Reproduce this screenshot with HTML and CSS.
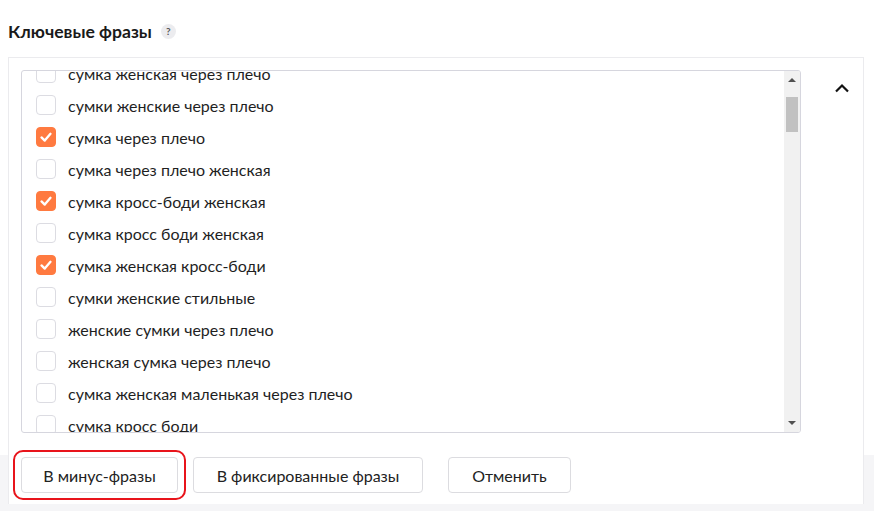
FILE: index.html
```html
<!DOCTYPE html>
<html lang="ru">
<head>
<meta charset="utf-8">
<link rel="stylesheet" href="styles.css">
</head>
<body>
<div class="header">
  <h2 class="title">Ключевые фразы</h2>
  <span class="help">?</span>
</div>
<div class="card">
  <div class="main">
    <div class="listbox">
      <div class="viewport">
        <ul class="rows">
          <li class="row"><span class="cb"></span><span class="label">сумка женская через плечо</span></li>
          <li class="row"><span class="cb"></span><span class="label">сумки женские через плечо</span></li>
          <li class="row"><span class="cb on"><svg viewBox="0 0 20 20"><polyline points="5,10.5 8.6,14 15,6.5"/></svg></span><span class="label">сумка через плечо</span></li>
          <li class="row"><span class="cb"></span><span class="label">сумка через плечо женская</span></li>
          <li class="row"><span class="cb on"><svg viewBox="0 0 20 20"><polyline points="5,10.5 8.6,14 15,6.5"/></svg></span><span class="label">сумка кросс-боди женская</span></li>
          <li class="row"><span class="cb"></span><span class="label">сумка кросс боди женская</span></li>
          <li class="row"><span class="cb on"><svg viewBox="0 0 20 20"><polyline points="5,10.5 8.6,14 15,6.5"/></svg></span><span class="label">сумка женская кросс-боди</span></li>
          <li class="row"><span class="cb"></span><span class="label">сумки женские стильные</span></li>
          <li class="row"><span class="cb"></span><span class="label">женские сумки через плечо</span></li>
          <li class="row"><span class="cb"></span><span class="label">женская сумка через плечо</span></li>
          <li class="row"><span class="cb"></span><span class="label">сумка женская маленькая через плечо</span></li>
          <li class="row"><span class="cb"></span><span class="label">сумка кросс боди</span></li>
        </ul>
      </div>
      <div class="scrollbar">
        <span class="arrow up"></span>
        <span class="track"><span class="thumb"></span></span>
        <span class="arrow down"></span>
      </div>
    </div>
    <div class="actions">
      <button class="btn btn-minus">В минус-фразы</button>
      <button class="btn btn-fixed">В фиксированные фразы</button>
      <button class="btn btn-cancel">Отменить</button>
    </div>
  </div>
  <div class="side">
    <svg class="chevron" viewBox="0 0 16 10"><polyline points="2,8.5 8,2.5 14,8.5"/></svg>
  </div>
</div>
</body>
</html>
```
FILE: styles.css
```css
* { box-sizing: border-box; }
html, body { margin: 0; padding: 0; }
body {
  width: 874px;
  height: 511px;
  overflow: hidden;
  font-family: "Lato", "Noto Sans", sans-serif;
  color: #1f1f1f;
  background: linear-gradient(to bottom, #ffffff 0, #ffffff 455px, #f5f5f7 455px);
}
.header {
  display: flex;
  align-items: center;
  height: 57px;
  padding: 5px 0 0 8px;
}
.title {
  margin: 0;
  font-size: 17.6px;
  font-weight: 700;
  color: #1a1a1a;
}
.help {
  width: 15px;
  height: 15px;
  margin-left: 9px;
  border-radius: 50%;
  background: #ececef;
  color: #555;
  font-size: 10px;
  font-weight: 700;
  line-height: 15px;
  text-align: center;
}
.card {
  display: flex;
  margin-left: 8px;
  width: 856px;
  height: 447px;
  background: #fff;
  border: 1px solid #ebebee;
  border-bottom: none;
}
.main {
  padding: 12px 0 0 12px;
}
.listbox {
  display: flex;
  width: 780px;
  height: 363px;
  border: 1px solid #d6d6de;
  border-radius: 3px;
  overflow: hidden;
}
.viewport {
  flex: 1;
  overflow: hidden;
}
.rows {
  list-style: none;
  margin: -14px 0 0 0;
  padding: 0 0 0 14px;
}
.row {
  display: flex;
  align-items: center;
  height: 32px;
}
.cb {
  width: 20px;
  height: 20px;
  flex: none;
  border: 1px solid #dcdce2;
  border-radius: 4px;
  background: #fff;
}
.cb.on {
  background: #ff7a40;
  border-color: #ff7a40;
}
.cb svg {
  display: block;
  width: 18px;
  height: 18px;
}
.cb svg polyline {
  fill: none;
  stroke: #fff;
  stroke-width: 2.6;
  stroke-linecap: round;
  stroke-linejoin: round;
}
.label {
  margin-left: 12px;
  font-size: 16px;
  white-space: nowrap;
}
.scrollbar {
  width: 16px;
  flex: none;
  background: #f1f1f1;
  display: flex;
  flex-direction: column;
  align-items: center;
}
.arrow {
  width: 0;
  height: 0;
  border-left: 4px solid transparent;
  border-right: 4px solid transparent;
  margin: 7px 0;
}
.arrow.up { border-bottom: 4px solid #505050; }
.arrow.down { border-top: 4px solid #505050; }
.track {
  flex: 1;
  width: 100%;
  padding: 8px 2px 0 2px;
}
.thumb {
  display: block;
  height: 35px;
  background: #c1c1c1;
}
.actions {
  display: flex;
  margin-top: 24px;
}
.btn {
  height: 36px;
  padding: 0;
  border: 1px solid #dcdce0;
  border-radius: 4px;
  background: #fff;
  font-family: "Lato", "Noto Sans", sans-serif;
  font-size: 16px;
  color: #222;
}
.btn-minus {
  position: relative;
  width: 157px;
}
.btn-minus::after {
  content: "";
  position: absolute;
  left: -9px;
  right: -9px;
  top: -8px;
  bottom: -8px;
  border: 2px solid #e8141b;
  border-radius: 10px;
}
.btn-fixed {
  width: 230px;
  margin-left: 15px;
}
.btn-cancel {
  width: 123px;
  margin-left: 25px;
}
.side {
  flex: 1;
  display: flex;
  justify-content: center;
  padding: 25px 0 0 20px;
}
.chevron {
  width: 16px;
  height: 10px;
}
.chevron polyline {
  fill: none;
  stroke: #111;
  stroke-width: 2.2;
}
```
